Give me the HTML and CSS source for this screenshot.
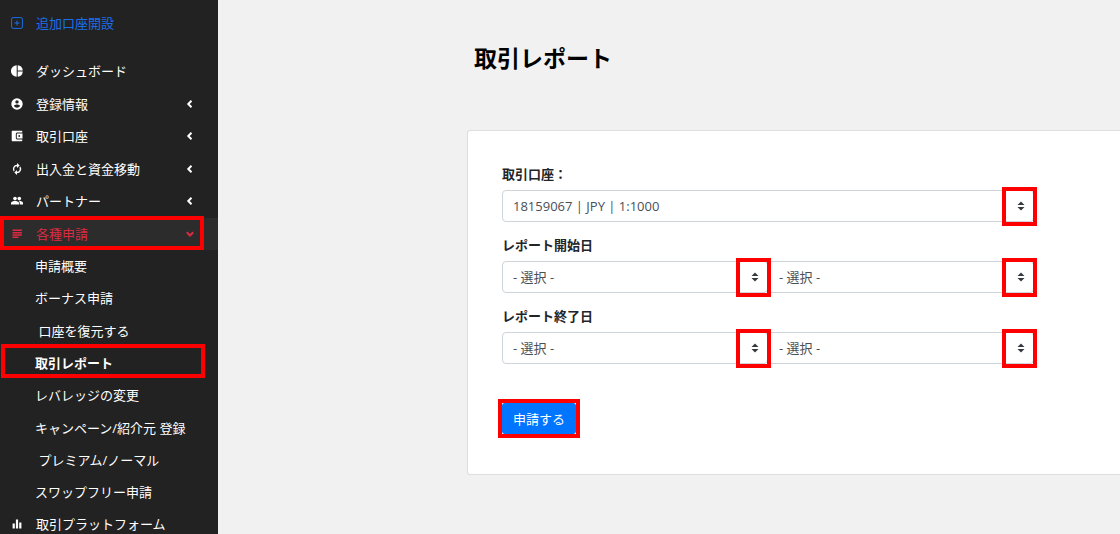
FILE: index.html
```html
<!DOCTYPE html>
<html lang="ja">
<head>
<meta charset="utf-8">
<meta name="viewport" content="width=device-width, initial-scale=1">
<title>取引レポート</title>
<link rel="stylesheet" href="styles.css">
</head>
<body>
<div class="layout">
  <aside class="sidebar">
    <a class="item open-account" href="#">
      <svg class="icon" viewBox="0 0 12 12" fill="none" stroke="currentColor"><rect x=".6" y=".6" width="10.8" height="10.8" rx="1.5"/><path d="M3.5 6h5M6 3.5v5"/></svg>
      <span>追加口座開設</span>
    </a>
    <nav>
      <ul class="menu">
        <li><a class="item" href="#">
          <svg class="icon" viewBox="0 0 12 12" fill="currentColor"><path d="M5.7.2a5.8 5.8 0 0 0 0 11.6zM6.7.2v5.2h5.1A5.8 5.8 0 0 0 6.7.2zM6.7 6.6v5.2a5.8 5.8 0 0 0 5.1-5.2z"/></svg>
          <span>ダッシュボード</span></a></li>
        <li><a class="item" href="#">
          <svg class="icon" viewBox="0 0 12 12" fill="currentColor"><path fill-rule="evenodd" d="M6 .3a5.7 5.7 0 1 0 0 11.4A5.7 5.7 0 0 0 6 .3zM6 2.2a1.7 1.7 0 1 1 0 3.4 1.7 1.7 0 0 1 0-3.4zM6 9.8a3.7 3.7 0 0 1-3.1-1.7C3 7.1 5 6.6 6 6.6s3 .5 3.1 1.5A3.7 3.7 0 0 1 6 9.8z"/></svg>
          <span>登録情報</span>
          <svg class="chevron" viewBox="0 0 8 8"><path d="M5.5 .8 2.3 4l3.2 3.2"/></svg></a></li>
        <li><a class="item" href="#">
          <svg class="icon" viewBox="0 0 12 12" fill="currentColor"><path fill-rule="evenodd" d="M1.7.7h8.6c.6 0 1 .4 1 1v.8H6.4c-.9 0-1.6.6-1.6 1.5v4c0 .9.7 1.5 1.6 1.5h4.9v.8c0 .6-.4 1-1 1H1.7c-.6 0-1-.4-1-1V1.7c0-.6.4-1 1-1zM6.4 3.4h5.1v5.2H6.4a.6.6 0 0 1-.6-.6V4c0-.3.3-.6.6-.6zM8.2 5.1a.9.9 0 1 0 0 1.8.9.9 0 0 0 0-1.8z"/></svg>
          <span>取引口座</span>
          <svg class="chevron" viewBox="0 0 8 8"><path d="M5.5 .8 2.3 4l3.2 3.2"/></svg></a></li>
        <li><a class="item" href="#">
          <svg class="icon" viewBox="0 0 12 12" fill="currentColor"><path d="M6 1.8V0l2.7 2.5L6 5V3.2A2.8 2.8 0 0 0 3.6 7.4l-1 1A4.2 4.2 0 0 1 6 1.8zM9.4 3.6A4.2 4.2 0 0 1 6 10.2V12L3.3 9.5 6 7v1.8a2.8 2.8 0 0 0 2.4-4.2z"/></svg>
          <span>出入金と資金移動</span>
          <svg class="chevron" viewBox="0 0 8 8"><path d="M5.5 .8 2.3 4l3.2 3.2"/></svg></a></li>
        <li><a class="item" href="#">
          <svg class="icon" viewBox="0 0 12 12" fill="currentColor"><circle cx="4" cy="3.6" r="1.8"/><circle cx="8.3" cy="3.6" r="1.8"/><path d="M0 9.5V8c0-1.4 2.6-2 4-2s4 .6 4 2v1.5zM8.7 9.5V8c0-.8-.4-1.4-1-1.9 1.5-.2 4.3.4 4.3 1.9v1.5z"/></svg>
          <span>パートナー</span>
          <svg class="chevron" viewBox="0 0 8 8"><path d="M5.5 .8 2.3 4l3.2 3.2"/></svg></a></li>
        <li><a class="item current marked" href="#" aria-expanded="true">
          <svg class="icon" viewBox="0 0 12 12" fill="currentColor"><path d="M1.5 1.6h9.4v1.5H1.5zM1.5 3.9h9.4v1.5H1.5zM1.5 6.2h9.4v1.5H1.5zM1.5 8.5h6V10h-6z"/></svg>
          <span>各種申請</span>
          <svg class="chevron" viewBox="0 0 8 8"><path d="M.8 2.3 4 5.5l3.2-3.2"/></svg></a>
          <ul class="submenu">
            <li><a class="item" href="#">申請概要</a></li>
            <li><a class="item" href="#">ボーナス申請</a></li>
            <li><a class="item" href="#">&nbsp;口座を復元する</a></li>
            <li><a class="item selected marked" href="#" aria-current="page">取引レポート</a></li>
            <li><a class="item" href="#">レバレッジの変更</a></li>
            <li><a class="item" href="#">キャンペーン/紹介元 登録</a></li>
            <li><a class="item" href="#">&nbsp;プレミアム/ノーマル</a></li>
            <li><a class="item" href="#">スワップフリー申請</a></li>
          </ul></li>
        <li><a class="item" href="#">
          <svg class="icon" viewBox="0 0 12 12" fill="currentColor"><path d="M1.6 5.5h2.2v5H1.6zM4.9 1.5h2.2v9H4.9zM8.2 4.5h2.2v6H8.2z"/></svg>
          <span>取引プラットフォーム</span></a></li>
      </ul>
    </nav>
  </aside>

  <main class="content">
    <h1 class="title">取引レポート</h1>
    <form class="card">
      <div class="field">
        <label for="account">取引口座：</label>
        <div class="selects">
          <div class="select-box">
            <select id="account"><option>18159067 | JPY | 1:1000</option></select>
            <svg class="arrows" viewBox="0 0 8 10"><path d="M4 .6 7.5 4h-7zM4 9.4.5 6h7z"/></svg>
          </div>
        </div>
      </div>
      <div class="field">
        <label for="start-first">レポート開始日</label>
        <div class="selects">
          <div class="select-box">
            <select id="start-first"><option>- 選択 -</option></select>
            <svg class="arrows" viewBox="0 0 8 10"><path d="M4 .6 7.5 4h-7zM4 9.4.5 6h7z"/></svg>
          </div>
          <div class="select-box">
            <select aria-label="レポート開始日"><option>- 選択 -</option></select>
            <svg class="arrows" viewBox="0 0 8 10"><path d="M4 .6 7.5 4h-7zM4 9.4.5 6h7z"/></svg>
          </div>
        </div>
      </div>
      <div class="field">
        <label for="end-first">レポート終了日</label>
        <div class="selects">
          <div class="select-box">
            <select id="end-first"><option>- 選択 -</option></select>
            <svg class="arrows" viewBox="0 0 8 10"><path d="M4 .6 7.5 4h-7zM4 9.4.5 6h7z"/></svg>
          </div>
          <div class="select-box">
            <select aria-label="レポート終了日"><option>- 選択 -</option></select>
            <svg class="arrows" viewBox="0 0 8 10"><path d="M4 .6 7.5 4h-7zM4 9.4.5 6h7z"/></svg>
          </div>
        </div>
      </div>
      <div class="submit-box"><button class="submit" type="button">申請する</button></div>
    </form>
  </main>
</div>
</body>
</html>
```

FILE: styles.css
```css
*, *::before, *::after { box-sizing: border-box; }

body {
  margin: 0;
  background: #f1f1f1;
  color: #212529;
  font: 13px/20px "Open Sans", "Noto Sans CJK JP", sans-serif;
}

.layout {
  display: flex;
  height: 100vh;
  overflow: hidden;
}

/* Sidebar */
.sidebar {
  flex: 0 0 218px;
  padding-top: 7px;
  background: #222;
}

.menu, .submenu {
  margin: 0;
  padding: 0;
  list-style: none;
}

.menu { margin-top: 16px; }
.menu > li:nth-child(even) { margin-top: 1px; }
.submenu > li:nth-child(3n) { margin-top: 1px; }

.item {
  display: flex;
  align-items: center;
  height: 32px;
  padding: 0 24px 0 11px;
  color: #fff;
  text-decoration: none;
  white-space: nowrap;
}

.submenu .item { padding-left: 35px; }

.open-account { color: #1a6fe8; }

.icon {
  width: 12px;
  height: 12px;
  margin-right: 13px;
}

.chevron {
  width: 8px;
  height: 8px;
  margin-left: auto;
  fill: none;
  stroke: currentColor;
  stroke-width: 2;
}

.current {
  background: #2c2c2c;
  color: #dc2a41;
}

.selected { font-weight: 700; }

/* Red marker frames */
.marked, .select-box, .submit-box { position: relative; }

.marked::after, .select-box::after, .submit-box::after {
  content: "";
  position: absolute;
  border: 4px solid #f00;
  pointer-events: none;
}

.marked::after { inset: -2px 14px 0 0; }
.selected::after { inset: -3px 13px 1px 1px; }

/* Content */
.content {
  flex: 1;
  min-width: 0;
  padding: 40px 0 0 249px;
}

.title {
  margin: 0 0 54px 7px;
  color: #000;
  font-size: 23px;
  line-height: 36px;
  font-weight: 700;
}

.card {
  padding: 33px 86px 40px 34px;
  background: #fff;
  border: 1px solid #dedede;
  border-right: 0;
  border-radius: 3px 0 0 3px;
}

.field { margin-bottom: 13px; }

.field label {
  display: block;
  margin-bottom: 6px;
  font-weight: 600;
}

.selects { display: flex; }
.select-box { flex: 1; }

.select-box select {
  display: block;
  appearance: none;
  width: 100%;
  height: 32px;
  padding: 0 32px 0 10px;
  background: #fff;
  border: 1px solid #ced4da;
  border-radius: 4px;
  color: #495057;
  font: inherit;
}

.arrows {
  position: absolute;
  top: 11px;
  right: 9px;
  width: 8px;
  height: 10px;
  fill: #343a40;
  pointer-events: none;
}

.select-box::after {
  z-index: 1;
  top: -3px;
  right: -3px;
  width: 35px;
  height: 39px;
}

.submit-box {
  width: fit-content;
  margin-top: 39px;
}

.submit-box::after { inset: -4px; }

.submit {
  display: block;
  height: 31px;
  padding: 0 11px;
  background: #0075ff;
  border: 0;
  border-radius: 3px;
  color: #fff;
  font: inherit;
}
```
